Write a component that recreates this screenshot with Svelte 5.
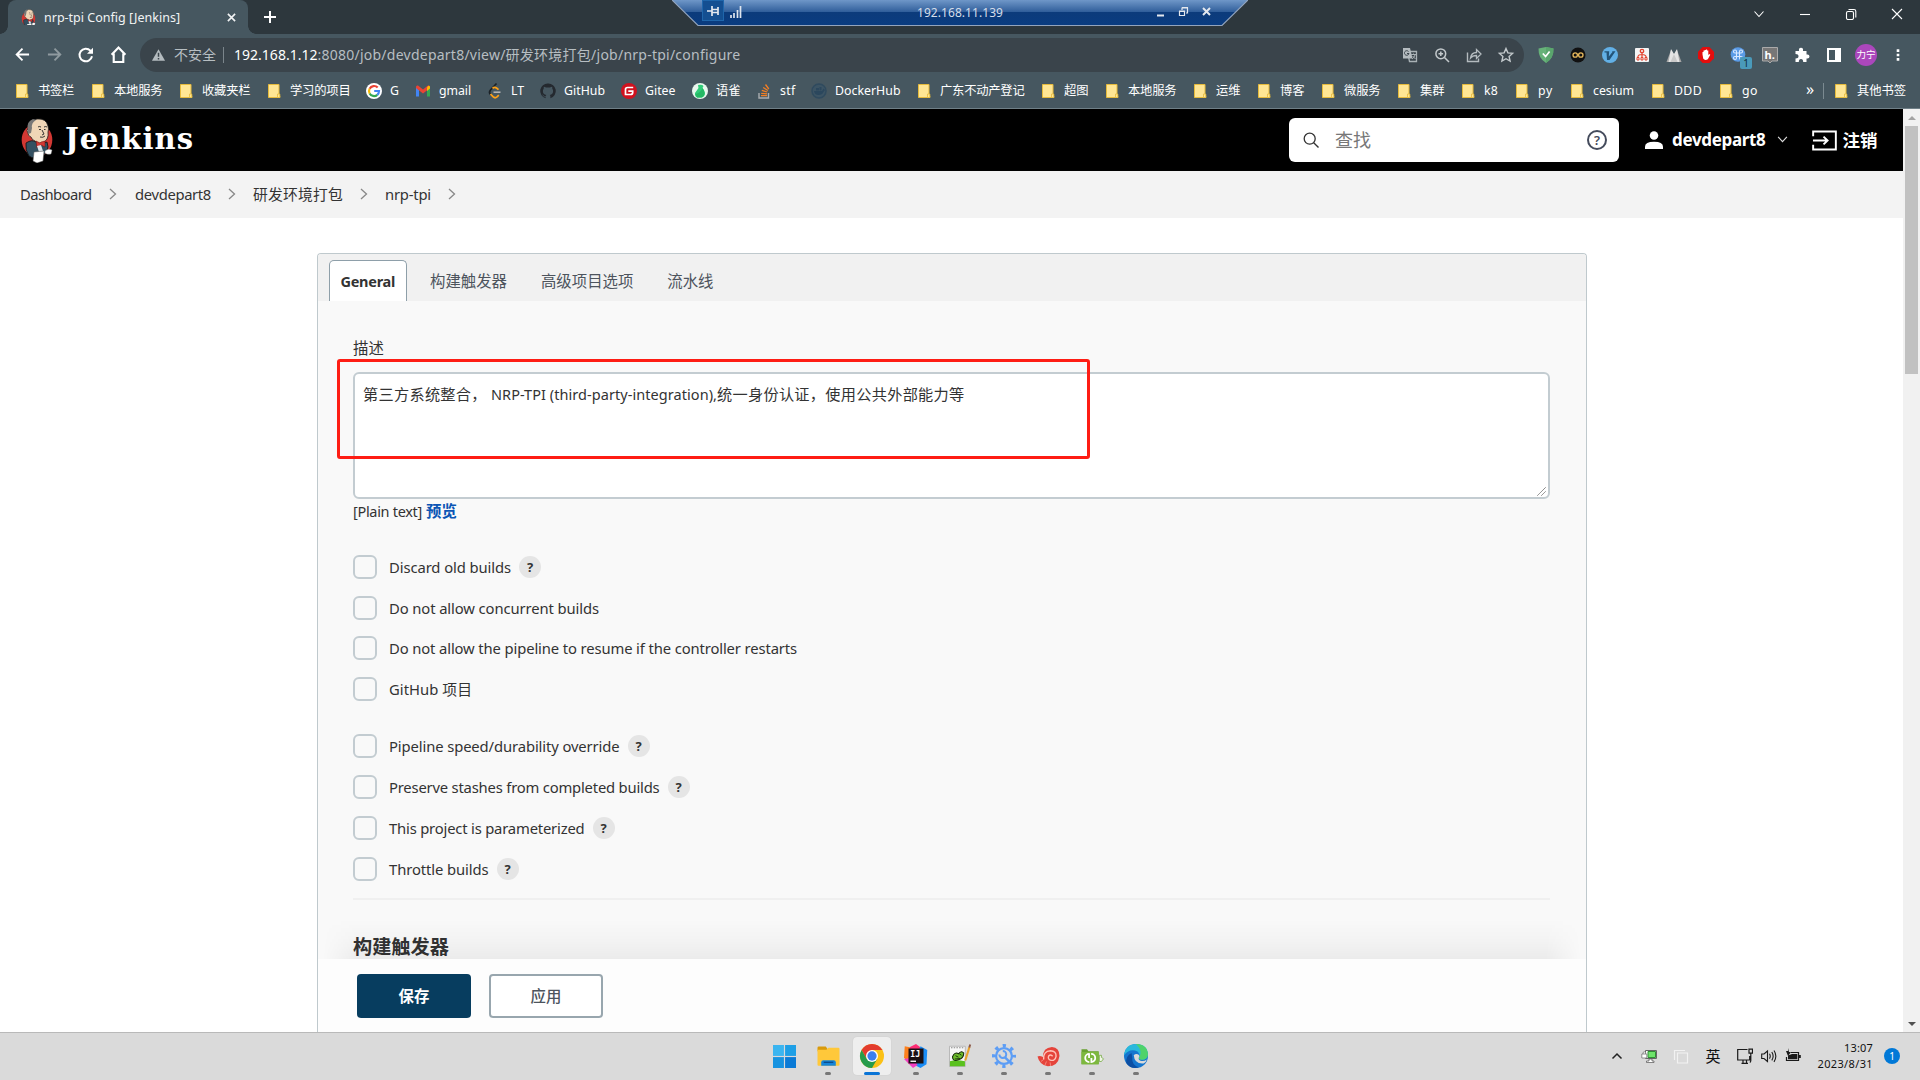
<script>
  // Adjusts tracking so that a run of text occupies a given advance width.
  function fit(node, width) {
    const range = document.createRange();
    range.selectNodeContents(node);
    const natural = range.getBoundingClientRect().width;
    const count = [...node.textContent].length;
    if (width && count) node.style.letterSpacing = (width - natural) / count + 'px';
  }

  const bookmarks = [
    { t: '书签栏', i: 'folder', w: 76, tw: 36 },
    { t: '本地服务', i: 'folder', w: 88, tw: 48.5 },
    { t: '收藏夹栏', i: 'folder', w: 88, tw: 48.5 },
    { t: '学习的项目', i: 'folder', w: 100, tw: 60.5 },
    { t: 'G', i: 'google', w: 49, tw: 9 },
    { t: 'gmail', i: 'gmail', w: 72, tw: 32 },
    { t: 'LT', i: 'leet', w: 53, tw: 13 },
    { t: 'GitHub', i: 'github', w: 81, tw: 41 },
    { t: 'Gitee', i: 'gitee', w: 71, tw: 30.5 },
    { t: '语雀', i: 'yuque', w: 64, tw: 24.5 },
    { t: 'stf', i: 'stack', w: 55, tw: 15.5 },
    { t: 'DockerHub', i: 'docker', w: 105, tw: 65.5 },
    { t: '广东不动产登记', i: 'folder', w: 124, tw: 84.5 },
    { t: '超图', i: 'folder', w: 64, tw: 24.5 },
    { t: '本地服务', i: 'folder', w: 88, tw: 48.5 },
    { t: '运维', i: 'folder', w: 64, tw: 24.5 },
    { t: '博客', i: 'folder', w: 64, tw: 24.5 },
    { t: '微服务', i: 'folder', w: 76, tw: 36.5 },
    { t: '集群', i: 'folder', w: 64, tw: 24.5 },
    { t: 'k8', i: 'folder', w: 54, tw: 14 },
    { t: 'py', i: 'folder', w: 55, tw: 15 },
    { t: 'cesium', i: 'folder', w: 81, tw: 41 },
    { t: 'DDD', i: 'folder', w: 68, tw: 28 },
    { t: 'go', i: 'folder', w: 60, tw: 16 }
  ];

  const omniIcons = ['translate', 'zoom', 'share', 'star'];
  const extensions = ['shield', 'goggles', 'vimium', 'sitemap', 'peaks', 'hand', 'command', 'hypo', 'puzzle', 'sidepanel'];

  const crumbs = [
    { t: 'Dashboard', w: 115, tw: 71.5 },
    { t: 'devdepart8', w: 118, tw: 76 },
    { t: '研发环境打包', w: 132, tw: 90 },
    { t: 'nrp-tpi', w: 88, tw: 46 }
  ];

  const groups = [
    [
      { t: 'Discard old builds', tw: 122, help: true },
      { t: 'Do not allow concurrent builds', tw: 210 },
      { t: 'Do not allow the pipeline to resume if the controller restarts', tw: 408 },
      { t: 'GitHub 项目', tw: 83 }
    ],
    [
      { t: 'Pipeline speed/durability override', tw: 230.5, help: true },
      { t: 'Preserve stashes from completed builds', tw: 270.5, help: true },
      { t: 'This project is parameterized', tw: 195.5, help: true },
      { t: 'Throttle builds', tw: 99.5, help: true }
    ]
  ];

  const apps = ['windows', 'explorer', 'chrome', 'idea', 'notepad', 'gear', 'shell', 'greenfolder', 'edge'];
</script>

{#snippet butler()}
  <svg class="butler" viewBox="0 0 32 45">
    <ellipse cx="16" cy="22" rx="15.3" ry="16.5" fill="#d33833" />
    <path d="M5 25q6-4 10-1l5 2 6-2q2 5 0 9l-4 5q-9 4-14 0-4-6-3-13z" fill="#335061" stroke="#111" stroke-width=".8" />
    <path d="M7 10q2-8 9-9 9-1 11 7 1 3 0 6 1 7-4 10-5 3-9-1-3-1-4-4-3-1-3-4-2-2 0-5z" fill="#f0d6b7" stroke="#222" stroke-width=".8" />
    <path d="M7 11q-2-7 5-10l3 1q-5 3-4 8l-1 5-3 1z" fill="#777" />
    <path d="M17 9q1-1 3 0M23 9q2-1 3 0M18 11.5h2M23 11.500h1.500M21 12l2 4-2 1M19 19q3 1 5-1" fill="none" stroke="#222" stroke-width=".9" />
    <path d="M15 23l4 2 1-1 4-1v6l-4-2-4 3z" fill="#d33833" stroke="#611" stroke-width=".5" />
    <path d="M16 28l4-1 2 6-4 1z" fill="#dce3e8" />
    <path d="M13 34l10-1-1 10-6 2-4-2z" fill="#fff" stroke="#555" stroke-width=".5" />
    <path d="M24 33q3-3 7-1l-1 4q-4 1-6-1z" fill="#fff" stroke="#888" stroke-width=".4" />
  </svg>
{/snippet}

{#snippet icon(name)}
  <svg class="ic ic-{name}" viewBox="0 0 16 16" fill="none" stroke-linecap="butt">
    {#if name === 'folder'}
      <path d="M2.500 1.500h10.500v10.500l.8 .8v1.700H2.500z" fill="#ffe694" stroke="#e6bb3c" />
      <path d="M11.500 14.500v-3.500h2.300v3.500z" fill="#ffe694" stroke="#e6bb3c" stroke-width=".8" />
    {:else if name === 'google'}
      <circle cx="8" cy="8" r="8" fill="#fff" />
      <g stroke-width="2.200">
        <path d="M11.700 4.600A5 5 0 0 0 3.600 5.700" stroke="#ea4335" />
        <path d="M3.600 5.700a5 5 0 0 0 0 4.700" stroke="#fbbc05" />
        <path d="M3.600 10.400a5 5 0 0 0 7.700 1.400" stroke="#34a853" />
        <path d="M11.300 11.800A5 5 0 0 0 13 8H8.200" stroke="#4285f4" />
      </g>
    {:else if name === 'gmail'}
      <path d="M1 4v9.500h3V7z" fill="#4285f4" /><path d="M15 4v9.500h-3V7z" fill="#34a853" />
      <path d="M1 5V4q0-2 2-1.500L8 6.500l5-4q2-.5 2 1.500v1L8 10.500z" fill="#ea4335" />
      <path d="M15 3.500v2L12 8V4.700L13 3q1.500-.6 2 .5z" fill="#fbbc04" />
    {:else if name === 'leet'}
      <path d="M9.500 .5L3.500 7q-2 2.500 0 4.500" stroke="#1b2227" stroke-width="1.700" />
      <path d="M3.500 11l2.500 2.700q2 2 4 .2l1.800-1.700M5.500 5.300q2-1.800 4-.3l2 1.700" stroke="#ffa116" stroke-width="1.700" />
      <path d="M6.500 9.200h7" stroke="#b3b3b3" stroke-width="1.600" />
    {:else if name === 'github'}
      <path d="M8 .5a7.500 7.500 0 0 0-2.400 14.700v-1.500c-2 .4-2.500-.5-2.900-1.400l-.8-.8c.9-.2 1.500.8 1.900 1.200.6.6 1.300.5 1.900.2l.6-1C4 11.600 2.900 10.700 2.900 8c0-1 .3-1.600.8-2.200-.1-.8 0-1.500.2-2 .7 0 1.400.3 2.100.8h4c.7-.5 1.400-.8 2.100-.8.2.6.3 1.300.2 2 .5.600.8 1.300.8 2.200 0 2.700-1.200 3.600-3.300 3.900.5.500.6 1 .6 1.800v1.500A7.500 7.500 0 0 0 8 .5z" fill="#24292f" />
    {:else if name === 'gitee'}
      <circle cx="8" cy="8" r="8" fill="#d0121f" />
      <path d="M12.200 4.500H6.500q-2 0-2 2v5h5q2.200 0 2.200-2V8.200H7.300" stroke="#fff" stroke-width="1.700" />
    {:else if name === 'yuque'}
      <circle cx="8" cy="8" r="8" fill="#e9f7ee" />
      <path d="M6 2q4-1 5.500 1L10.500 5q2 2 2.500 5 0 3-3 4.500H5Q2.500 13 3 10l3.500-5z" fill="#31cc79" />
      <path d="M3.500 11q5-1 7-6 2 3 2 5 0 3-3 4.500H5z" fill="#25b864" />
    {:else if name === 'stack'}
      <path d="M3 10v5h9.500v-5" stroke="#a9adb0" stroke-width="1.400" />
      <path d="M5 12.600h6M5.200 10.300l5.800.6M5.800 7.400l5.500 1.600M7.200 4.500l4.700 3M9.500 1.500L12.800 6" stroke="#f47f24" stroke-width="1.300" />
    {:else if name === 'docker'}
      <circle cx="8" cy="8" r="7" stroke="#2f4a5e" stroke-width="1.500" fill="#3c5464" />
      <path d="M3 8h8l1.500-2.500 1.500 1.500-1.500 2q-1 3-5 3-4 0-4.500-4zM5 5h3v2.500H5zM8.500 4h2v3.500h-2z" fill="#2b475d" />
    {:else if name === 'back'}
      <path d="M15 8H2M8 1.800L1.800 8 8 14.200" stroke="#fff" stroke-width="2" />
    {:else if name === 'forward'}
      <path d="M1 8h13M8 1.800L14.200 8 8 14.200" stroke="#8f9a9f" stroke-width="2" />
    {:else if name === 'reload'}
      <path d="M14 9.200A6.300 6.300 0 1 1 12.400 3.600L14 5.200" stroke="#fff" stroke-width="2" />
      <path d="M15 .8v6H9z" fill="#fff" />
    {:else if name === 'home'}
      <path d="M1.500 8.300L8 1.500l6.500 6.800M3.500 7v8h9V7" stroke="#fff" stroke-width="2" />
    {:else if name === 'warn'}
      <path d="M8 1.500L15.500 14.500H.5z" fill="#b4bbbf" /><path d="M8 5.500v4.500M8 11.300v1.700" stroke="#3a444b" stroke-width="1.700" />
    {:else if name === 'translate'}
      <path d="M5.500 4.500h9v10h-7z" stroke="#a9b1b5" stroke-width="1.300" /><path d="M1 1h7l2.500 10.500H1z" fill="#b4bbbf" />
      <path d="M6.500 4.500A2.300 2.300 0 1 0 7 6.500H5" stroke="#3a444b" /><path d="M9 7.500h5M11.500 6.500v1M13 8q-1 3-3 4M10.500 9l3 3" stroke="#a9b1b5" />
    {:else if name === 'zoom'}
      <circle cx="6.800" cy="6.800" r="4.900" stroke="#c3c9cc" stroke-width="1.500" /><path d="M10.500 10.500l4.500 4.500M6.800 4.500v4.600M4.500 6.800h4.600" stroke="#c3c9cc" stroke-width="1.500" />
    {:else if name === 'share'}
      <path d="M1.500 5.500v9h11v-3" stroke="#b4bbbf" stroke-width="1.400" /><path d="M4.500 11q.8-5.500 6-5.500V2.500L15 7l-4.500 4.500V8.500Q6.500 8.500 4.500 11z" stroke="#b4bbbf" stroke-width="1.300" />
    {:else if name === 'star'}
      <path d="M8 1.600l1.900 4.300 4.700.5-3.500 3.100 1 4.600L8 11.700l-4.100 2.400 1-4.600L1.400 6.400l4.700-.5z" stroke="#c3c9cc" stroke-width="1.400" />
    {:else if name === 'shield'}
      <path d="M8 0q4 .5 7.500 1.500Q16 11 8 16 0 11 .5 1.500 4 .5 8 0z" fill="#67b279" /><path d="M8 0q4 .5 7.500 1.500Q16 11 8 16z" fill="#5aa66d" /><path d="M4.800 6.500l2.800 3 4-5" stroke="#fff" stroke-width="1.700" />
    {:else if name === 'goggles'}
      <circle cx="8" cy="8" r="7.500" fill="#111" /><circle cx="5.200" cy="8" r="2.200" stroke="#e6b85c" stroke-width="1.300" /><circle cx="10.800" cy="8" r="2.200" stroke="#e6b85c" stroke-width="1.300" />
    {:else if name === 'vimium'}
      <circle cx="8" cy="8" r="8" fill="#62b0e6" /><path d="M2.500 4.300h4.700L6.800 9.500 10.500 5l-.5-.8h3.500L7.500 13H5L4.500 5.500h-2z" fill="#235377" />
    {:else if name === 'sitemap'}
      <rect x="1" y="1" width="14" height="14" rx="1" fill="#f4f4f4" /><circle cx="8" cy="4" r="1.700" stroke="#e2432f" stroke-width="1.300" /><path d="M8 6v4M3.800 10.500q0-3 4.200-3t4.200 3" stroke="#e2432f" stroke-width="1.200" /><path d="M3 10.500h2v2.500H3zM7 10.500h2v2.500H7zM11 10.500h2v2.500h-2z" stroke="#e2432f" />
    {:else if name === 'peaks'}
      <path d="M5 3l2.500 4L5 15H.5z" fill="#a5a5a5" /><path d="M11 3L8.500 7 11 15h4.500z" fill="#a5a5a5" /><path d="M5 2l3 5 3-5 2.500 13h-11z" fill="#e4e4e4" /><path d="M8 7l-3.500 8h7z" fill="#c9c9c9" />
    {:else if name === 'hand'}
      <path d="M4.700 0h6.600L16 4.700v6.600L11.300 16H4.700L0 11.300V4.700z" fill="#e40d0d" /><path d="M4.500 7.500V5h1V3.500h1.200V3h1.200v-.5h1.200V3.500h1.200V8l1.200-1 .8.800-2.500 4.500q-3 1.500-4.500-.5z" fill="#fff" />
    {:else if name === 'command'}
      <circle cx="8" cy="7.500" r="7.300" fill="#5a9be6" /><path d="M6.500 9.500H4.700A1.500 1.500 0 1 0 6.500 11V4.500A1.500 1.500 0 1 0 5 6h6a1.500 1.500 0 1 0-1.500-1.500V11A1.500 1.500 0 1 0 11 9.500z" stroke="#d8e9ff" stroke-width="1.100" />
    {:else if name === 'hypo'}
      <path d="M.5.5h15v13.500H10L8 16l-2-2H.5z" fill="#777" stroke="#aaa" /><text x="2.600" y="11.500" class="hy">h.</text>
    {:else if name === 'puzzle'}
      <path d="M1.500 4H5Q4.500.8 7 .8T9 4h3.500v3.500q3-.5 3 2t-3 2V15H9.200q0-3-2.200-3t-2.200 3H1.500v-3.500q3 0 3-2.200t-3-2.200z" fill="#fff" />
    {:else if name === 'sidepanel'}
      <path d="M1 1h14v14H1zM3 3v10h6V3z" fill="#fff" fill-rule="evenodd" />
    {:else if name === 'search'}
      <circle cx="6.700" cy="6.700" r="5.500" stroke="#333" stroke-width="1.300" /><path d="M10.700 10.700l4.800 4.800" stroke="#333" stroke-width="1.400" />
    {:else if name === 'user'}
      <circle cx="8" cy="4" r="3.800" fill="#fff" /><path d="M0 16v-2q0-4.500 8-4.500T16 14v2z" fill="#fff" />
    {:else if name === 'windows'}
      <path d="M0 0h7.600v7.600H0z" fill="#3bb5f0" /><path d="M8.400 0H16v7.600H8.400z" fill="#1e9fe6" /><path d="M0 8.400h7.600V16H0z" fill="#1793e0" /><path d="M8.400 8.400H16V16H8.400z" fill="#0a7ad6" />
    {:else if name === 'explorer'}
      <path d="M0 2q0-1 1-1h5l1 1.500v2H0z" fill="#d99a0b" /><path d="M0 3.500h6.500L8 2h7.300q.7 0 .7.700v11.600q0 .7-.7.700H.7q-.7 0-.7-.7z" fill="#ffc83a" /><path d="M2.700 15v-2.500q0-1.500 1.500-1.500h7.600q1.500 0 1.500 1.500V15z" fill="#1685d9" /><path d="M4.500 12.600h7" stroke="#0a4d8c" />
    {:else if name === 'chrome'}
      <circle cx="8" cy="8" r="8" fill="#fbc116" /><path d="M1.070 4A8 8 0 0 1 14.930 4H8L4.530 10z" fill="#e33b2e" /><path d="M1.070 4A8 8 0 0 0 8 16l3.460-6H4.530z" fill="#269b4b" /><circle cx="8" cy="8" r="4" fill="#fff" /><circle cx="8" cy="8" r="3.100" fill="#3b7fee" />
    {:else if name === 'idea'}
      <path d="M.5 1.500l5 1-2 11L0 9z" fill="#fc801d" /><path d="M4 2l4-2 4 3-1 5-8 1z" fill="#fe2d74" /><path d="M11 1.500l4.500 2.500-.5 9.500-4 2.500-5-2.500z" fill="#1a8cf5" /><path d="M0 10l6-1 3 5-3 2z" fill="#f23dc0" /><path d="M3 3h10v10H3z" fill="#1a1014" />
      <path d="M4.300 11.500h3.700" stroke="#fff" stroke-width=".9" /><text x="4.200" y="8.400" class="ij">IJ</text>
    {:else if name === 'notepad'}
      <path d="M1 1.500h10.500V15H1z" fill="#f7f7f7" stroke="#aaa" stroke-width=".5" /><path d="M1.300 11.500q4-1.500 10 0v3.300h-10z" fill="#5ac11e" /><path d="M3 8.500q1.500-3.500 4-2 2-2.500 3.500-.5 0 3.500-3.500 4.500Q3 12 3 8.500z" fill="#6dbd2b" stroke="#162b0b" stroke-width=".7" /><path d="M5 7.800l2 1M7.500 6.500l1.500 1M4.500 10l3.500-.3" stroke="#162b0b" stroke-width=".6" /><path d="M2 2.500h9" stroke="#888" stroke-dasharray="1 .8" stroke-width=".8" /><path d="M14.300 2L11.500 11" stroke="#e9a22b" stroke-width="1.400" /><path d="M14.200 2.300l.6-2" stroke="#8c5a4a" stroke-width="1.300" />
    {:else if name === 'gear'}
      <circle cx="8" cy="8" r="5.300" stroke="#5c9df5" stroke-width="1.500" /><circle cx="8" cy="8" r="6.900" stroke="#5c9df5" stroke-width="2.200" stroke-dasharray="2.200 3.220" stroke-dashoffset="1.100" /><path d="M8.700 8.900l3.300 3.300" stroke="#5c9df5" stroke-width="1.600" /><path d="M7.200 4.700A2.300 2.300 0 1 1 4.900 7" stroke="#5c9df5" stroke-width="1.300" />
    {:else if name === 'shell'}
      <path d="M0 8.300q2-.6 4 .5Q3.800 2 10.500 1.500 16 2 16 8q-1 7.500-8.500 7.500Q1.500 14.500 0 8.300z" fill="#e5443b" /><path d="M4.500 10.500Q4 4.500 9.500 4.200q4.200.2 4 4-.7 3.300-3.700 3-2.600-.8-1.700-3.200 1.500-1.500 2.900.2" stroke="#ffc2b8" stroke-width="1" /><path d="M2.500 12l2-1.500M5.500 14.500l1-2.500M9.500 15.200l-.3-2.500" stroke="#f8958a" stroke-width=".6" />
    {:else if name === 'greenfolder'}
      <path d="M0 3h4l1 1.500h7.500V14H0z" fill="#67a02f" /><path d="M0 5h12.500v9H0z" fill="#7db83e" /><path d="M5.700 6.500a3 3 0 0 0 0 6M7 12.500a3 3 0 0 0 0-6M5.500 6v3.500M7.200 9.500V13" stroke="#fff" stroke-width="1.300" /><path d="M13 7.500h1.500v1.500L16 10l-1.500 2H13z" fill="#eef7e4" stroke="#67a02f" stroke-width=".5" />
    {:else if name === 'edge'}
      <circle cx="8" cy="8" r="8" fill="#1576cf" /><path d="M0 7.500Q1 0 8 0q7.500 0 8 7-.5 3.500-4 3.500-2.500 0-2-1.500 1-2-1-4Q4 2.500 0 7.500z" fill="#2bb8dc" /><path d="M8 0q7.500 0 8 7-.5 3.500-4 3.500-2.500 0-2-1.500Q13 5 8 0z" fill="#4fd36b" /><path d="M5.500 9q-.5 5 4.500 6.700-6 1.300-8.500-3Q1 8 5 6z" fill="#0c4fa3" /><path d="M6.500 7.500q1.500-1.500 3.500-.2.500 1-.2 2Q9.500 11 12 11.300q2 0 3.200-1-.4 2-2.200 2.700Q7 13.500 6.500 7.500z" fill="#dadada" />
    {/if}
  </svg>
{/snippet}

<div class="screen">
  <header class="tabstrip">
    <div class="tab">
      <span class="fav">{@render butler()}</span>
      <span class="tabtitle" use:fit={136}>nrp-tpi Config [Jenkins]</span>
      <svg class="tabclose" viewBox="0 0 10 10"><path d="M1 1l8 8M9 1l-8 8" stroke="#f1f3f4" stroke-width="1.800" /></svg>
    </div>
    <svg class="newtab" viewBox="0 0 12 12"><path d="M6 0v12M0 6h12" stroke="#fff" stroke-width="2" /></svg>
    <div class="wincontrols">
      <svg viewBox="0 0 12 12"><path d="M1.500 3.500L6 8.500l4.500-5" /></svg>
      <svg viewBox="0 0 12 12"><path d="M1 6.500h10" /></svg>
      <svg viewBox="0 0 12 12"><rect x="1.500" y="3.500" width="7" height="8" rx="1.500" /><path d="M3.500 1.500H9q1.800 0 1.800 1.800V9.500" /></svg>
      <svg viewBox="0 0 12 12"><path d="M1 1l10 10M11 1L1 11" /></svg>
    </div>
  </header>

  <div class="rdp">
    <svg class="rdpbg" viewBox="0 0 576 27">
      <defs>
        <linearGradient id="rdpg" x1="0" y1="0" x2="0" y2="1">
          <stop offset="0" stop-color="#6f97c8" /><stop offset=".46" stop-color="#315f9b" /><stop offset=".47" stop-color="#0c3b7b" /><stop offset="1" stop-color="#0a3c80" />
        </linearGradient>
      </defs>
      <path d="M0 0h576l-26 25.500H26z" fill="url(#rdpg)" />
      <path d="M0 0l26 25.500h524L576 0" fill="none" stroke="#93a4bd" stroke-width="1.200" />
    </svg>
    <div class="rdprow">
      <span class="pin"><svg viewBox="0 0 12 10"><path d="M0 5h5M5 0v10M5 3.500h6M5 6.500h6M11 1v8" stroke="#e4e8ee" stroke-width="1.700" fill="none" /></svg></span>
      <svg class="signal" viewBox="0 0 12 12"><path d="M1 12V9M4 12V7M7.500 12V4M10.500 12V0" stroke="#dfe5ee" stroke-width="1.700" /></svg>
      <span class="rdpaddr" use:fit={86}>192.168.11.139</span>
      <span class="rdpctl">
        <svg viewBox="0 0 12 12"><path d="M2 9.500h7" stroke="#e4e8ee" stroke-width="2" /></svg>
        <svg viewBox="0 0 12 12"><path d="M1.500 5.500h5v4h-5zM1 5h6M4 4V2h5.500v5H8M4 1.500h6" stroke="#e4e8ee" stroke-width="1.200" fill="none" /></svg>
        <svg viewBox="0 0 12 12"><path d="M2 2l7 7M9 2L2 9" stroke="#e4e8ee" stroke-width="2" /></svg>
      </span>
    </div>
  </div>

  <div class="toolbar">
    {#each ['back', 'forward', 'reload', 'home'] as n}
      <span class="tool">{@render icon(n)}</span>
    {/each}
    <div class="omnibox">
      {@render icon('warn')}
      <span class="insecure" use:fit={42}>不安全</span>
      <i class="osep"></i>
      <span class="host" use:fit={83.5}>192.168.1.12</span>
      <span class="path" use:fit={423}>:8080/job/devdepart8/view/研发环境打包/job/nrp-tpi/configure</span>
      <div class="omniright">
        {#each omniIcons as n}<span class="tool">{@render icon(n)}</span>{/each}
      </div>
    </div>
    <div class="exts">
      {#each extensions as n}
        <span class="tool ext">{@render icon(n)}{#if n === 'command'}<b class="count">1</b>{/if}</span>
      {/each}
      <span class="tool"><b class="avatar">力宁</b></span>
      <span class="tool"><svg class="dots" viewBox="0 0 4 16"><path d="M.5 1.500h3v3h-3zM.5 6.500h3v3h-3zM.5 11.500h3v3h-3z" fill="#fff" /></svg></span>
    </div>
  </div>

  <nav class="bookmarks">
    {#each bookmarks as b}
      <span class="bm" style:width="{b.w}px">{@render icon(b.i)}<span use:fit={b.tw}>{b.t}</span></span>
    {/each}
    <span class="more">»</span>
    <i class="bsep"></i>
    <span class="bm other">{@render icon('folder')}<span use:fit={49}>其他书签</span></span>
  </nav>

  <div class="viewport">
    <div class="page">
      <div class="jhead">
        {@render butler()}
        <span class="brand" use:fit={129}>Jenkins</span>
        <div class="search">
          {@render icon('search')}
          <span class="ph">查找</span>
          <span class="qmark">?</span>
        </div>
        <div class="user">{@render icon('user')}<b use:fit={93.500}>devdepart8</b>
          <svg class="chev" viewBox="0 0 12 8"><path d="M1 1l5 5.500L11 1" stroke="#ddd" stroke-width="1.300" fill="none" /></svg>
        </div>
        <div class="logout">
          <svg viewBox="0 0 26 21"><path d="M1.200 6V1.200h23.600v18.600H1.200V15M1 10.500h15M12 6.500l4.200 4-4.200 4" stroke="#fff" stroke-width="2" fill="none" /></svg>
          <b>注销</b>
        </div>
      </div>

      <div class="crumbs">
        {#each crumbs as c}
          <span class="crumb" style:width="{c.w}px"><span use:fit={c.tw}>{c.t}</span>
            <svg viewBox="0 0 8 12"><path d="M1 1l5.500 5L1 11" stroke="#888" stroke-width="1.300" fill="none" /></svg></span>
        {/each}
      </div>

      <main class="panel">
        <div class="tabs">
          <span class="on" use:fit={54.500}>General</span>
          <span class="t2">构建触发器</span>
          <span class="t3">高级项目选项</span>
          <span class="t4">流水线</span>
        </div>
        <div class="form">
          <div class="lbl">描述</div>
          <div class="area">
            <span use:fit={128}>第三方系统整合，&nbsp;</span><span use:fit={226}>NRP-TPI (third-party-integration),</span><span use:fit={247.500}>统一身份认证，使用公共外部能力等</span>
            <svg class="grip" viewBox="0 0 9 9"><path d="M.5 8.500l8-8M4.500 8.500l4-4" stroke="#555" stroke-dasharray="1.100 .4" /></svg>
          </div>
          <div class="hint"><span use:fit={69}>[Plain text]</span><b>预览</b></div>
          {#each groups as g}
            <div class="group">
              {#each g as o}
                <div class="opt"><i class="box"></i><span use:fit={o.tw}>{o.t}</span>{#if o.help}<b class="help">?</b>{/if}</div>
              {/each}
            </div>
          {/each}
          <hr />
          <h2>构建触发器</h2>
          <div class="mark"></div>
        </div>
        <div class="actions">
          <b class="btn save">保存</b>
          <b class="btn apply">应用</b>
        </div>
      </main>
    </div>
    <div class="scroll">
      <svg viewBox="0 0 17 17"><path d="M5 11h8L9 7z" fill="#a3a3a3" /></svg>
      <div class="thumb"></div>
      <svg class="down" viewBox="0 0 17 17"><path d="M5 7h8l-4 4z" fill="#505050" /></svg>
    </div>
  </div>

  <footer class="taskbar">
    <div class="apps">
      {#each apps as a}
        <span class="app {a}"><span class="tile">{@render icon(a)}</span>{#if a !== 'windows'}<i></i>{/if}</span>
      {/each}
    </div>
    <div class="tray">
      <span class="w32"><svg viewBox="0 0 16 16"><path d="M3.500 10.500L8 6l4.500 4.500" stroke="#222" stroke-width="1.500" fill="none" /></svg></span>
      <span class="w32"><svg viewBox="0 0 16 16"><path d="M4.500 2.500h11v8h-11z" fill="#fff" stroke="#666" /><path d="M7 3.500h7.500v6H7z" fill="#6fe36b" stroke="#2f8f35" /><path d="M8 11h3v2h2v1.500H5.500V13H8z" fill="#fff" stroke="#555" stroke-width=".7" /><path d="M.8 6h5v4h-5zM2 6V4.500q1.300-1.500 2.600 0V6" fill="#fff" stroke="#777" stroke-width=".8" /></svg></span>
      <span class="w32"><svg viewBox="0 0 16 16"><path d="M4.500 5h10v10h-10zM1.500 12V2.500H12" stroke="#f2f2f2" stroke-width="1.200" fill="none" /></svg></span>
      <span class="w32 ime">英</span>
      <span class="w24 first"><svg viewBox="0 0 16 16"><path d="M10.500 1.500H.7v10.500h12V8M4.500 15.300h6.500M6 12v3M9.500 12v3M12 1.200h3.500v4H12zM13.800 5v7.500q0 1.500-1 2" stroke="#1a1a1a" stroke-width="1.200" fill="none" /></svg></span>
      <span class="w24"><svg viewBox="0 0 16 16"><path d="M.7 6v4.500H3l3.500 3V3L3 6zM8.500 5.800q1.500 2.400 0 4.800M10.800 4q2.700 4.200 0 8.400M13 2.500q3.700 5.700 0 11.400" stroke="#1a1a1a" stroke-width="1.100" fill="none" /></svg></span>
      <span class="w24"><svg viewBox="0 0 16 16"><path d="M6 4.500h7.500v8H1.500V9" stroke="#1a1a1a" stroke-width="1.200" fill="none" /><path d="M3 7.500L7 6h5.300v5.300H3zM14 7h1.800v3H14zM3 0v3H1l2 5 3-4H4z" fill="#1a1a1a" /></svg></span>
      <div class="clock"><span use:fit={29}>13:07</span><span use:fit={55.500}>2023/8/31</span></div>
      <b class="notif">1</b>
    </div>
  </footer>
</div>

<style>
  :global(body) { margin: 0; overflow: hidden; }
  .screen, .screen :global(*) { box-sizing: border-box; }
  .screen { width: 1920px; height: 1080px; display: flex; flex-direction: column; position: relative; overflow: hidden; background: #fff; color: #333; font-family: 'Noto Sans', 'Noto Sans CJK SC', sans-serif; font-size: 14.500px; white-space: nowrap; line-height: 20px; }
  .screen span, .screen svg, .screen b, .screen i { flex: none; }
  svg { display: block; }
  .ic { width: 16px; height: 16px; overflow: visible; }
  .ij { font: 700 5.500px 'DejaVu Sans Mono', monospace; fill: #fff; }
  .hy { font: 700 11px 'Noto Sans', sans-serif; fill: #fff; }

  .tabstrip { height: 34px; flex: none; background: #2d373d; display: flex; padding-left: 8px; }
  .tab { width: 240px; height: 34px; background: #465760; border-radius: 8px 8px 0 0; display: flex; align-items: center; padding: 0 12px 0 13px; position: relative; }
  .tab::before, .tab::after { content: ''; position: absolute; bottom: 0; width: 8px; height: 8px; }
  .tab::before { left: -8px; background: radial-gradient(circle at 0 0, transparent 7.500px, #465760 8px); }
  .tab::after { right: -8px; background: radial-gradient(circle at 100% 0, transparent 7.500px, #465760 8px); }
  .fav { width: 23px; height: 16px; overflow: hidden; }
  .fav .butler { width: 15px; height: 20px; }
  .tabtitle { font-size: 12.500px; color: #f1f3f4; margin: 1px auto 0 0; }
  .tabclose { width: 9px; height: 9px; }
  .newtab { width: 12px; height: 12px; margin: 11px 0 0 16px; }
  .wincontrols { margin: 8px 17px 0 auto; display: flex; gap: 34px; }
  .wincontrols svg { width: 12px; height: 12px; fill: none; stroke: #fff; stroke-width: 1.100; }

  .rdp { position: absolute; left: 672px; top: 0; width: 576px; height: 27px; }
  .rdpbg { position: absolute; inset: 0; width: 576px; height: 27px; }
  .rdprow { position: relative; display: flex; align-items: center; height: 24px; padding-left: 30px; }
  .pin { width: 22px; height: 21px; background: #144f91; border: 1px solid #1f66ab; display: grid; place-items: center; margin-top: -3px; }
  .pin svg { width: 12px; height: 10px; }
  .signal { width: 12px; height: 12px; margin-left: 6px; }
  .rdpaddr { margin: 1px 0 0 175px; font-size: 12px; color: #d5deea; width: 86px; }
  .rdpctl { display: flex; gap: 11px; margin-left: 152px; }
  .rdpctl svg { width: 12px; height: 12px; }

  .toolbar { height: 40px; flex: none; background: #465760; display: flex; align-items: center; padding: 1px 6px 0; }
  .tool { width: 32px; display: grid; place-items: center; position: relative; }
  .toolbar .ic-home { width: 17px; height: 17px; }
  .toolbar .ic-back, .toolbar .ic-forward { width: 15px; height: 15px; }
  .omnibox { margin-left: 6px; width: 1384px; height: 34px; border-radius: 17px; background: #3a444b; display: flex; align-items: center; padding-left: 11px; font-size: 14px; color: #b7bec2; }
  .omnibox .ic-warn { width: 15px; height: 14px; margin-right: 8px; }
  .insecure { width: 42px; }
  .osep { width: 1px; height: 16px; background: #7b858b; margin: 0 10px 0 7px; }
  .host { color: #fff; width: 83.500px; }
  .omniright { margin-left: auto; display: flex; padding-right: 2px; }
  .exts { display: flex; margin-left: 6px; align-items: center; }
  .count { position: absolute; left: 18px; top: 10px; width: 12px; height: 12px; border-radius: 2px; background: #4a9aba; color: #0e2e3b; font-size: 10px; line-height: 12px; text-align: center; font-weight: 400; }
  .avatar { width: 22px; height: 22px; border-radius: 50%; background: #ab47bc; color: #fff; font-size: 9.500px; font-weight: 400; line-height: 21px; text-align: center; }
  .dots { width: 4px; height: 14px; }

  .bookmarks { height: 35px; flex: none; background: #465760; border-bottom: 1px solid #6f7f87; display: flex; align-items: center; padding-left: 14px; font-size: 12.300px; color: #fff; }
  .bm { display: flex; align-items: center; gap: 8px; line-height: 16px; }
  .bm .ic { margin-top: -1px; }
  .more { width: 17px; margin-left: 28px; font-size: 16px; line-height: 16px; margin-top: -4px; }
  .bsep { width: 1px; height: 16px; background: #7b8a91; margin-right: 9px; }

  .viewport { height: 923px; flex: none; display: flex; }
  .page { width: 1903px; display: flex; flex-direction: column; }
  .jhead { height: 62px; flex: none; background: #000; display: flex; align-items: center; padding-left: 21px; color: #fff; }
  .butler { width: 32px; height: 45px; }
  .brand { margin: -2px 0 0 12px; width: 129px; font-family: 'DejaVu Serif', serif; font-weight: 700; font-size: 29px; line-height: 40px; }
  .search { margin-left: 1095px; width: 330px; height: 44px; border-radius: 6px; background: #fff; display: flex; align-items: center; padding: 0 12px 0 14px; }
  .ph { font-size: 18px; color: #777; margin: 0 auto 0 16px; line-height: 24px; }
  .qmark { width: 20px; height: 20px; border: 2px solid #444b5c; border-radius: 50%; color: #444b5c; font-size: 13px; line-height: 16px; text-align: center; font-weight: 600; }
  .user { display: flex; align-items: center; margin-left: 26px; font-size: 17px; }
  .user .ic { width: 18px; height: 18px; margin-right: 9px; }
  .user b { width: 93.500px; }
  .chev { width: 11px; height: 7px; margin: -2px 0 0 11px; }
  .logout { display: flex; align-items: center; margin-left: 24px; gap: 6px; font-size: 17.500px; }
  .logout svg { width: 25px; height: 21px; }
  .crumbs { height: 47px; flex: none; background: #f3f3f3; display: flex; align-items: center; padding: 0 0 2px 20px; font-size: 14.800px; }
  .crumb { display: flex; align-items: center; gap: 17px; }
  .crumb svg { width: 8px; height: 12px; }

  .panel { margin: 35px 0 0 317px; width: 1269.500px; flex: 1; border: 1px solid #bfc9cd; border-bottom: 0; border-radius: 4px 4px 0 0; background: #f9f9f9; display: flex; flex-direction: column; position: relative; overflow: hidden; }
  .tabs { height: 47px; flex: none; background: #f1f1f1; display: flex; align-items: flex-end; padding-left: 11px; font-size: 15.400px; color: #4d545d; }
  .tabs span { line-height: 38px; height: 41px; padding-top: 3px; }
  .tabs .on { width: 78px; padding-left: 10.500px; border: 1px solid #8e9fa9; border-bottom: 0; border-radius: 5px 5px 0 0; background: #fff; color: #333; font-weight: 700; font-size: 14.500px; padding-top: 1px; }
  .t2 { margin-left: 23px; }
  .t3 { margin-left: 34px; }
  .t4 { margin-left: 34px; }
  .form { flex: 1; min-height: 0; overflow: hidden; padding: 36px 36px 0 35px; font-size: 14.800px; }
  .lbl { height: 35px; line-height: 23px; font-size: 15.400px; }
  .area { height: 127px; border: 2px solid #c3ccd1; border-radius: 6px; background: #fff; padding: 10px 8px; display: flex; position: relative; font-size: 15.200px; }
  .area span:nth-child(2) { font-size: 14.500px; }
  .grip { position: absolute; right: 2px; bottom: 1px; width: 9px; height: 9px; }
  .hint { height: 47.500px; line-height: 25px; display: flex; gap: 4px; font-size: 14.500px; }
  .hint b { color: #0b55b5; font-size: 15.400px; line-height: 26px; }
  .group { padding-bottom: 16px; }
  .opt { height: 40.800px; display: flex; align-items: center; }
  .group + .group .opt { height: 41px; }
  .box { width: 24px; height: 24px; border: 2px solid #c3ccd1; border-radius: 6px; margin-right: 12px; }
  .opt span { line-height: 24px; }
  .help { width: 22px; height: 22px; border-radius: 50%; background: #e5e5e5; text-align: center; font-size: 13px; line-height: 22px; margin-left: 8px; }
  hr { border: 0; height: 2px; background: #f0f0f0; margin: -8px 0 0; }
  h2 { margin: 36px 0 0; font-size: 19.200px; line-height: 22px; font-weight: 700; }
  .mark { position: absolute; left: 19px; top: 105px; width: 753px; height: 100px; border: 3px solid #fe1d14; border-radius: 3px; }
  .actions { height: 73px; flex: none; position: relative; display: flex; gap: 18px; padding: 15px 0 0 39px; background: #fdfdfd; }
  .actions::before { content: ''; position: absolute; left: 5px; right: 5px; top: -40px; height: 40px; background: linear-gradient(to top, rgba(0, 0, 0, .055), rgba(0, 0, 0, .025) 45%, transparent); mask-image: linear-gradient(to right, transparent, #000 35px, #000 calc(100% - 35px), transparent); }
  .btn { width: 114px; height: 44px; border-radius: 4px; text-align: center; line-height: 46px; font-size: 15.400px; }
  .save { background: #073d5f; color: #fff; }
  .apply { background: #fff; border: 2px solid #98a6ae; line-height: 42px; color: #4d545d; font-weight: 500; }

  .scroll { width: 17px; background: #f1f1f1; display: flex; flex-direction: column; }
  .scroll svg { width: 17px; height: 17px; }
  .thumb { height: 248px; margin: 0 2px; background: #c1c1c1; }
  .down { margin-top: auto; }

  .taskbar { height: 48px; flex: none; background: #dadada; border-top: 1px solid #b9b9b9; display: flex; }
  .apps { display: flex; padding-left: 762px; }
  .app { width: 44px; height: 47px; display: flex; flex-direction: column; align-items: center; padding-top: 4px; position: relative; }
  .tile { width: 38px; height: 38px; border-radius: 4px; display: grid; place-items: center; }
  .app .ic { width: 24px; height: 24px; }
  .app .ic-windows { width: 23px; height: 23px; }
  .app .ic-explorer, .app .ic-shell, .app .ic-greenfolder { width: 23px; height: 22px; }
  .chrome .tile { background: #eee; box-shadow: 0 0 1px #bbb; }
  .app i { position: absolute; bottom: 5px; width: 6px; height: 3px; border-radius: 2px; background: #777; }
  .app.chrome i { width: 16px; background: #0a74d6; }
  .tray { margin-left: auto; display: flex; align-items: center; padding-right: 20px; }
  .tray svg { width: 16px; height: 16px; }
  .w32, .w24 { display: grid; place-items: center; width: 32px; margin-top: -1px; }
  .w24 { width: 24px; }
  .first { margin-left: 4px; }
  .ime { font-size: 15px; color: #111; }
  .clock { width: 68px; display: flex; flex-direction: column; align-items: flex-end; font-size: 11px; line-height: 16px; color: #111; margin-top: -1px; }
  .notif { width: 16px; height: 16px; border-radius: 50%; background: #0078d7; color: #fff; font-size: 10px; line-height: 16px; text-align: center; margin-left: 11px; margin-top: -1px; font-weight: 400; }
</style>
